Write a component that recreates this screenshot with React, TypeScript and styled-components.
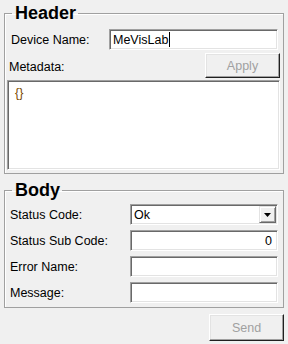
import styled, { createGlobalStyle } from "styled-components";

const GlobalStyle = createGlobalStyle`
  html, body {
    margin: 0;
    padding: 0;
    background: #f0f0f0;
  }
  body {
    font-family: "Liberation Sans", Arial, sans-serif;
    font-size: 12.5px;
    color: #000;
  }
`;

const Page = styled.div`
  width: 288px;
  height: 344px;
  box-sizing: border-box;
  padding: 3px 4px 0 4px;
  background: #f0f0f0;
  display: flex;
  flex-direction: column;
`;

const Group = styled.fieldset<{ $top?: number }>`
  margin: ${(p) => p.$top ?? 0}px 0 0 0;
  padding: 6px 3px 3px 2px;
  border: 1px solid #a0a0a0;
  box-shadow: inset 1px 1px #fff;
  min-width: 0;
  display: flex;
  flex-direction: column;
`;

const Title = styled.legend`
  margin-left: 5px;
  padding: 0 2px 0 3px;
  font-weight: bold;
  font-size: 18px;
  line-height: 20px;
`;

const Row = styled.div<{ $height?: number; $gap?: number }>`
  display: flex;
  align-items: center;
  height: ${(p) => p.$height ?? 21}px;
  margin-top: ${(p) => p.$gap ?? 0}px;
`;

const Label = styled.span<{ $width?: number; $indent?: number; $drop?: number }>`
  flex: ${(p) => (p.$width ? `0 0 ${p.$width}px` : "1")};
  box-sizing: border-box;
  padding-left: ${(p) => p.$indent ?? 3}px;
  padding-top: ${(p) => p.$drop ?? 0}px;
  white-space: nowrap;
`;

const Field = styled.div<{ $align?: string; $inset?: number }>`
  flex: 1;
  height: 21px;
  box-sizing: border-box;
  margin-right: ${(p) => p.$inset ?? 2}px;
  background: #fff;
  border-style: solid;
  border-width: 1px;
  border-color: #a0a0a0 #fff #fff #a0a0a0;
  box-shadow: inset 1px 1px #696969, inset -1px -1px #e3e3e3;
  display: flex;
  align-items: center;
  justify-content: ${(p) => p.$align ?? "flex-start"};
  padding: 0 5px 0 3px;
  white-space: nowrap;
`;

const Caret = styled.span`
  display: inline-block;
  width: 1px;
  height: 15px;
  margin-left: 1px;
  background: #000;
`;

const TextArea = styled.div`
  margin-top: 2px;
  height: 90px;
  box-sizing: border-box;
  background: #fff;
  border-style: solid;
  border-width: 1px;
  border-color: #a0a0a0 #fff #fff #a0a0a0;
  box-shadow: inset 1px 1px #696969, inset -1px -1px #e3e3e3;
  padding: 5px 7px;
  color: #7a4a00;
`;

const Button = styled.button<{ $height: number }>`
  flex: 0 0 75px;
  width: 75px;
  height: ${(p) => p.$height}px;
  box-sizing: border-box;
  background: #f0f0f0;
  border-style: solid;
  border-width: 1px;
  border-color: #fff #202020 #202020 #fff;
  box-shadow: inset -1px -1px #a0a0a0, inset 1px 1px #e3e3e3;
  font-family: "Liberation Sans", Arial, sans-serif;
  font-size: 12.5px;
  color: #a0a0a0;
  padding: 1px 0 0 0;
`;

const Combo = styled(Field)`
  padding-right: 1px;
  justify-content: space-between;
`;

const DropButton = styled.span`
  width: 17px;
  height: 17px;
  box-sizing: border-box;
  background: #f0f0f0;
  border-style: solid;
  border-width: 1px;
  border-color: #e3e3e3 #696969 #696969 #e3e3e3;
  box-shadow: inset 1px 1px #fff, inset -1px -1px #a0a0a0;
  display: flex;
  align-items: center;
  justify-content: center;
`;

const Footer = styled.div`
  display: flex;
  justify-content: flex-end;
  margin-top: 6px;
`;

const bodyRows = ["Status Sub Code:", "Error Name:", "Message:"];

export default function App() {
  return (
    <>
      <GlobalStyle />
      <Page>
        <Group>
          <Title>Header</Title>
          <Row>
            <Label $width={102} $indent={4}>
              Device Name:
            </Label>
            <Field>
              MeVisLab
              <Caret />
            </Field>
          </Row>
          <Row $height={25} $gap={3}>
            <Label $indent={2} $drop={2}>
              Metadata:
            </Label>
            <Button $height={25} disabled>
              Apply
            </Button>
          </Row>
          <TextArea>{"{}"}</TextArea>
        </Group>
        <Group $top={6} style={{ paddingTop: 4, paddingBottom: 4 }}>
          <Title>Body</Title>
          <Row>
            <Label $width={123} $drop={1}>
              Status Code:
            </Label>
            <Combo>
              Ok
              <DropButton>
                <svg width="7" height="4" viewBox="0 0 7 4">
                  <path d="M0 0H7L3.5 4Z" fill="#000" />
                </svg>
              </DropButton>
            </Combo>
          </Row>
          {bodyRows.map((label, i) => (
            <Row key={label} $gap={5}>
              <Label $width={123} $drop={1}>
                {label}
              </Label>
              <Field $align={i === 0 ? "flex-end" : "flex-start"}>
                {i === 0 ? "0" : ""}
              </Field>
            </Row>
          ))}
        </Group>
        <Footer>
          <Button $height={27} disabled>
            Send
          </Button>
        </Footer>
      </Page>
    </>
  );
}
